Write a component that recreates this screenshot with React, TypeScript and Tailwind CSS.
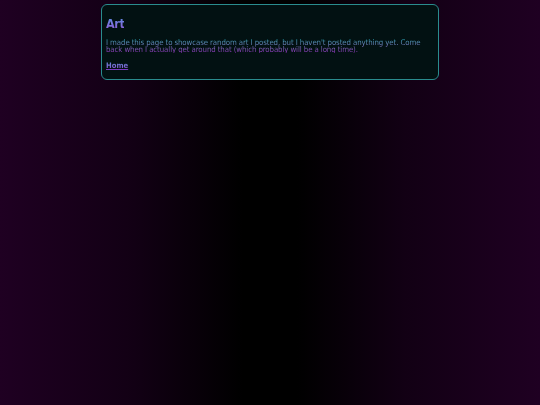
import React from 'react';

const gradText = 'bg-gradient-to-b bg-clip-text text-transparent';

const App: React.FC = () => {
  return (
    <div
      className="min-h-[405px] w-full bg-[linear-gradient(to_right,#1f0022_0%,#120014_25%,#000000_45%,#000000_55%,#120014_75%,#1f0022_100%)] pt-[4px]"
      style={{ fontFamily: '"DejaVu Sans Condensed", "DejaVu Sans", Verdana, sans-serif' }}
    >
      <div className="mx-auto w-[338px] rounded-[6px] border border-[#2a8c8e] bg-[#021112] px-[4px] pt-[10px] pb-[8px]">
        <h1
          className={`${gradText} from-[#4a94e4] to-[#9050d4] text-[12.5px] font-bold leading-[17px] tracking-[-0.4px] w-fit`}
        >
          Art
        </h1>
        <p className={`${gradText} from-[#22a6b6] to-[#8a28b4] mt-[7px] text-[7.8px] leading-[7px] tracking-[-0.1px]`}>
          I made this page to showcase random art I posted, but I haven't posted anything yet. Come back when I
          actually get around that (which probably will be a long time).
        </p>
        <div className="mt-[8px] flex leading-[10px]">
          <a
            href="#"
            className={`${gradText} from-[#5a90dc] to-[#8a3ccc] block text-[7.6px] font-bold leading-[10px] underline decoration-[#7a3ac0]`}
          >
            Home
          </a>
        </div>
      </div>
    </div>
  );
};

export default App;
